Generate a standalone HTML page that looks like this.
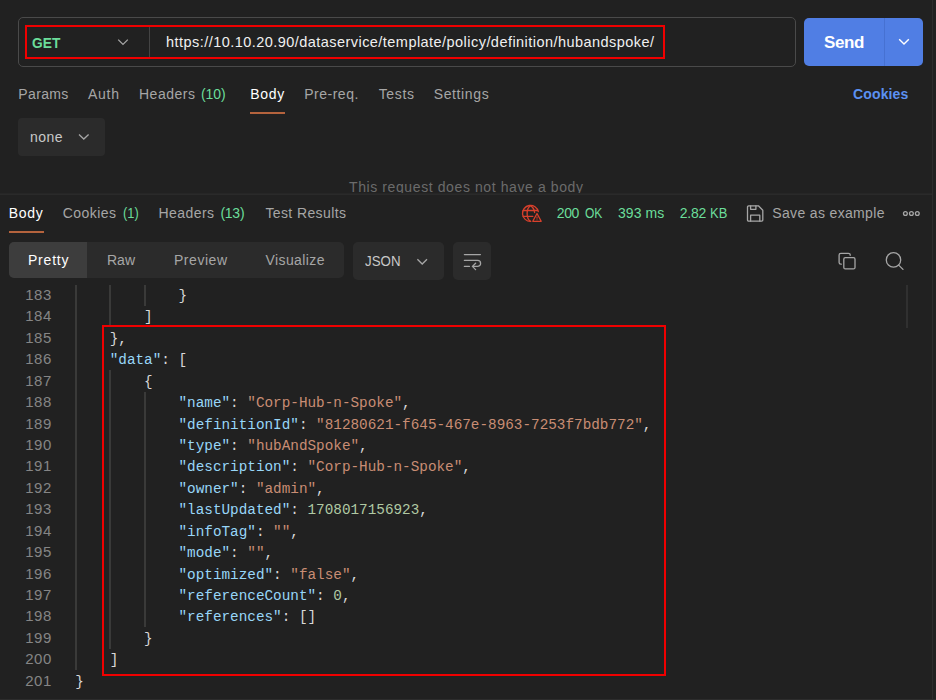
<!DOCTYPE html>
<html><head><meta charset="utf-8"><title>Postman</title><style>
html,body{margin:0;padding:0;}
body{width:936px;height:700px;background:#212121;overflow:hidden;position:relative;font-family:"Liberation Sans", sans-serif;}
.a{position:absolute;}
.t{position:absolute;white-space:pre;line-height:1;}
.c{position:absolute;white-space:pre;font-family:"Liberation Mono", monospace;font-size:14.33px;line-height:21px;height:21px;letter-spacing:0.0006px}
.ln{position:absolute;left:0;width:51.8px;text-align:right;font-size:15px;color:#858585;line-height:21px;height:21px;letter-spacing:0.5px}
.g{position:absolute;width:2px;background:#3a3a39;}
svg{position:absolute;overflow:visible}

</style></head><body>
<div class="a" id="req" style="left:0;top:0;width:932px;height:194px;overflow:hidden">
<div class="a" style="left:18px;top:17px;width:776px;height:48px;border:1px solid #4a4a4a;border-radius:5px;"></div>
<div class="a" style="left:149px;top:27px;width:1px;height:30px;background:#444"></div>
<div class="a" style="left:25px;top:25px;width:636px;height:30px;border:2px solid #f00000;"></div>
<svg style="left:0;top:0" width="1" height="1"><path d="M118.2 39.6 L123 44.4 L127.8 39.6" fill="none" stroke="#a6a6a6" stroke-width="1.3"/></svg>
<div class="a" style="left:804px;top:18px;width:119px;height:48px;background:#507ee4;border-radius:5px;"></div>
<div class="a" style="left:884px;top:18px;width:1px;height:48px;background:#4671d2"></div>
<svg style="left:897px;top:36px" width="14" height="12" viewBox="0 0 14 12"><path d="M2.2 3.2 L7 8 L11.8 3.2" fill="none" stroke="#ffffff" stroke-width="1.4"/></svg>
<div class="a" style="left:250px;top:112px;width:35px;height:2px;background:#b5633d"></div>
<div class="a" style="left:18px;top:118px;width:87px;height:38px;background:#2b2b2b;border-radius:4px;"></div>
<svg style="left:77px;top:131px" width="14" height="12" viewBox="0 0 14 12"><path d="M2 3.5 L6.8 8 L11.6 3.5" fill="none" stroke="#a6a6a6" stroke-width="1.3"/></svg>
<span class="t" id="t0" style="left:32.00px;top:35.53px;font-size:14.5px;font-weight:700;color:#6bdd9a;letter-spacing:0.000px;transform:scaleX(0.9493);transform-origin:0 0">GET</span>
<span class="t" id="t1" style="left:166.00px;top:35.23px;font-size:14.5px;font-weight:400;color:#f0f0f0;letter-spacing:0.454px">https://10.10.20.90/dataservice/template/policy/definition/hubandspoke/</span>
<span class="t" id="t2" style="left:824.00px;top:33.61px;font-size:17px;font-weight:700;color:#ffffff;letter-spacing:-0.354px">Send</span>
<span class="t" id="t3" style="left:18.30px;top:86.95px;font-size:14px;font-weight:400;color:#a6a6a6;letter-spacing:0.353px">Params</span>
<span class="t" id="t4" style="left:88.00px;top:86.95px;font-size:14px;font-weight:400;color:#a6a6a6;letter-spacing:0.729px">Auth</span>
<span class="t" id="t5" style="left:139.00px;top:86.95px;font-size:14px;font-weight:400;color:#a6a6a6;letter-spacing:0.513px">Headers</span>
<span class="t" id="t6" style="left:201.00px;top:86.95px;font-size:14px;font-weight:400;color:#6bdd9a;letter-spacing:-0.069px">(10)</span>
<span class="t" id="t7" style="left:250.30px;top:86.95px;font-size:14px;font-weight:400;color:#ffffff;letter-spacing:0.693px">Body</span>
<span class="t" id="t8" style="left:304.30px;top:86.95px;font-size:14px;font-weight:400;color:#a6a6a6;letter-spacing:0.489px">Pre-req.</span>
<span class="t" id="t9" style="left:378.70px;top:86.95px;font-size:14px;font-weight:400;color:#a6a6a6;letter-spacing:0.653px">Tests</span>
<span class="t" id="t10" style="left:433.70px;top:86.95px;font-size:14px;font-weight:400;color:#a6a6a6;letter-spacing:0.629px">Settings</span>
<span class="t" id="t11" style="left:853.00px;top:87.15px;font-size:14px;font-weight:700;color:#5b91f2;letter-spacing:0.139px">Cookies</span>
<span class="t" id="t12" style="left:30.00px;top:130.15px;font-size:14px;font-weight:400;color:#c8c8c8;letter-spacing:0.448px">none</span>
<span class="t" id="t13" style="left:349.00px;top:180.15px;font-size:14px;font-weight:400;color:#6b6b6b;letter-spacing:0.600px">This request does not have a body</span>
</div>
<div class="a" style="left:0;top:193px;width:932px;height:1px;background:#262626"></div><div class="a" style="left:0;top:194px;width:932px;height:1px;background:#2a2a2a"></div>
<div class="a" style="left:932px;top:0;width:1px;height:700px;background:#2d2d2d"></div>
<div class="a" style="left:0;top:699px;width:936px;height:1px;background:#2d2d2d"></div>
<div class="a" style="left:9px;top:231px;width:35px;height:2px;background:#b5633d"></div>
<div class="a" style="left:9px;top:242px;width:335px;height:36px;background:#2b2b2b;border-radius:5px;"></div>
<div class="a" style="left:9px;top:242px;width:78px;height:36px;background:#3d3d3d;border-radius:5px 0 0 5px;"></div>
<div class="a" style="left:353px;top:242px;width:91px;height:38px;background:#2b2b2b;border-radius:5px;"></div>
<svg style="left:0;top:0" width="1" height="1"><path d="M417.4 259.2 L422.2 264 L427 259.2" fill="none" stroke="#a6a6a6" stroke-width="1.3"/></svg>
<div class="a" style="left:453px;top:242px;width:38px;height:38px;background:#2b2b2b;border-radius:5px;"></div>
<svg style="left:0;top:0" width="1" height="1" fill="none" stroke-linecap="round" stroke-linejoin="round">
<g stroke="#d8402c" stroke-width="1.3">
<path d="M530.7 221.4 A8 8 0 1 1 538.3 211.6"/>
<path d="M530.5 205.6 C526 208.5 526 218.5 530.5 221.4"/>
<path d="M530.5 205.6 C533 207.2 534.3 209.5 534.6 212.5"/>
<path d="M523.2 210.5 H537.6 M523.2 216.4 H532.8"/>
<path d="M537 213.5 L541.2 221.3 H532.8 Z"/>
<path d="M537 216.9 V218.3 M537 219.8 V219.9" stroke-width="1"/>
</g>
<g stroke="#a6a6a6" stroke-width="1.3">
<path d="M748.6 205.8 H758.4 L762.8 210.2 V220.1 a1.1 1.1 0 0 1 -1.1 1.1 H748.6 a1.1 1.1 0 0 1 -1.1 -1.1 V206.9 a1.1 1.1 0 0 1 1.1 -1.1 Z"/>
<path d="M750.6 205.8 V209.3 H755.9 V205.8"/>
<path d="M750.6 221.2 V215.2 H759.8 V221.2"/>
<circle cx="905.4" cy="213.5" r="1.9"/><circle cx="911.4" cy="213.5" r="1.9"/><circle cx="917.3" cy="213.5" r="1.9"/>
<path d="M464.4 254.6 H480.4 M464.4 260.4 H477.6 a3 3 0 0 1 0 6 H473 M464.4 266.4 H469.4 M475.6 263.2 L472.4 266.4 L475.6 269.6"/>
<rect x="843.8" y="257.7" width="11.2" height="11.2" rx="1.5"/>
<path d="M841.3 264.2 H840.9 a1.8 1.8 0 0 1 -1.8 -1.8 V255.1 a1.8 1.8 0 0 1 1.8 -1.8 H848.4 a1.8 1.8 0 0 1 1.8 1.8 V255.3"/>
<circle cx="893.5" cy="259.9" r="7.2"/><path d="M898.7 265.1 L903 269.4"/>
</g></svg>
<span class="t" id="t14" style="left:8.80px;top:206.15px;font-size:14px;font-weight:400;color:#ffffff;letter-spacing:0.659px">Body</span>
<span class="t" id="t15" style="left:62.70px;top:206.15px;font-size:14px;font-weight:400;color:#a6a6a6;letter-spacing:0.451px">Cookies</span>
<span class="t" id="t16" style="left:123.00px;top:206.15px;font-size:14px;font-weight:400;color:#6bdd9a;letter-spacing:0.000px;transform:scaleX(0.9168);transform-origin:0 0">(1)</span>
<span class="t" id="t17" style="left:158.50px;top:206.15px;font-size:14px;font-weight:400;color:#a6a6a6;letter-spacing:0.430px">Headers</span>
<span class="t" id="t18" style="left:220.40px;top:206.15px;font-size:14px;font-weight:400;color:#6bdd9a;letter-spacing:-0.235px">(13)</span>
<span class="t" id="t19" style="left:265.40px;top:206.15px;font-size:14px;font-weight:400;color:#a6a6a6;letter-spacing:0.395px">Test Results</span>
<span class="t" id="t20" style="left:556.70px;top:206.45px;font-size:14px;font-weight:400;color:#6bdd9a;letter-spacing:-0.330px">200</span>
<span class="t" id="t21" style="left:585.40px;top:206.45px;font-size:14px;font-weight:400;color:#6bdd9a;letter-spacing:0.000px;transform:scaleX(0.8599);transform-origin:0 0">OK</span>
<span class="t" id="t22" style="left:618.00px;top:206.45px;font-size:14px;font-weight:400;color:#6bdd9a;letter-spacing:0.076px">393 ms</span>
<span class="t" id="t23" style="left:679.70px;top:206.45px;font-size:14px;font-weight:400;color:#6bdd9a;letter-spacing:-0.183px">2.82</span>
<span class="t" id="t24" style="left:710.40px;top:206.45px;font-size:14px;font-weight:400;color:#6bdd9a;letter-spacing:0.000px;transform:scaleX(0.9258);transform-origin:0 0">KB</span>
<span class="t" id="t25" style="left:772.30px;top:206.45px;font-size:14px;font-weight:400;color:#a6a6a6;letter-spacing:0.342px">Save as example</span>
<span class="t" id="t26" style="left:28.00px;top:253.15px;font-size:14px;font-weight:400;color:#ffffff;letter-spacing:0.784px">Pretty</span>
<span class="t" id="t27" style="left:107.00px;top:253.15px;font-size:14px;font-weight:400;color:#a6a6a6;letter-spacing:-0.008px">Raw</span>
<span class="t" id="t28" style="left:174.00px;top:253.15px;font-size:14px;font-weight:400;color:#a6a6a6;letter-spacing:0.534px">Preview</span>
<span class="t" id="t29" style="left:265.50px;top:253.15px;font-size:14px;font-weight:400;color:#a6a6a6;letter-spacing:0.402px">Visualize</span>
<span class="t" id="t30" style="left:365.30px;top:254.15px;font-size:14px;font-weight:400;color:#c8c8c8;letter-spacing:0.000px;transform:scaleX(0.9506);transform-origin:0 0">JSON</span>
<div class="a" id="code" style="left:0;top:0;width:932px;height:699px;overflow:hidden">
<div class="g" style="left:75px;top:284.60px;height:385.74px"></div>
<div class="g" style="left:109px;top:284.60px;height:42.86px"></div>
<div class="g" style="left:109px;top:370.32px;height:278.59px"></div>
<div class="g" style="left:144px;top:284.60px;height:21.43px"></div>
<div class="g" style="left:144px;top:391.75px;height:235.73px"></div>
<div class="g" style="left:906px;top:285px;width:2px;height:43px;background:#303030"></div>
<div class="ln" style="top:284px">183</div>
<div class="c" style="left:178.50px;top:286px"><span style="color:#d8d8d8">}</span></div>
<div class="ln" style="top:305px">184</div>
<div class="c" style="left:144.10px;top:307px"><span style="color:#d8d8d8">]</span></div>
<div class="ln" style="top:327px">185</div>
<div class="c" style="left:109.70px;top:329px"><span style="color:#d8d8d8">},</span></div>
<div class="ln" style="top:348px">186</div>
<div class="c" style="left:109.70px;top:350px"><span style="color:#98d6f8">"data"</span><span style="color:#d8d8d8">: [</span></div>
<div class="ln" style="top:370px">187</div>
<div class="c" style="left:144.10px;top:372px"><span style="color:#d8d8d8">{</span></div>
<div class="ln" style="top:391px">188</div>
<div class="c" style="left:178.50px;top:393px"><span style="color:#98d6f8">"name"</span><span style="color:#d8d8d8">: </span><span style="color:#c98d74">"Corp-Hub-n-Spoke"</span><span style="color:#d8d8d8">,</span></div>
<div class="ln" style="top:413px">189</div>
<div class="c" style="left:178.50px;top:415px"><span style="color:#98d6f8">"definitionId"</span><span style="color:#d8d8d8">: </span><span style="color:#c98d74">"81280621-f645-467e-8963-7253f7bdb772"</span><span style="color:#d8d8d8">,</span></div>
<div class="ln" style="top:434px">190</div>
<div class="c" style="left:178.50px;top:436px"><span style="color:#98d6f8">"type"</span><span style="color:#d8d8d8">: </span><span style="color:#c98d74">"hubAndSpoke"</span><span style="color:#d8d8d8">,</span></div>
<div class="ln" style="top:455px">191</div>
<div class="c" style="left:178.50px;top:457px"><span style="color:#98d6f8">"description"</span><span style="color:#d8d8d8">: </span><span style="color:#c98d74">"Corp-Hub-n-Spoke"</span><span style="color:#d8d8d8">,</span></div>
<div class="ln" style="top:477px">192</div>
<div class="c" style="left:178.50px;top:479px"><span style="color:#98d6f8">"owner"</span><span style="color:#d8d8d8">: </span><span style="color:#c98d74">"admin"</span><span style="color:#d8d8d8">,</span></div>
<div class="ln" style="top:498px">193</div>
<div class="c" style="left:178.50px;top:500px"><span style="color:#98d6f8">"lastUpdated"</span><span style="color:#d8d8d8">: </span><span style="color:#b0c9a3">1708017156923</span><span style="color:#d8d8d8">,</span></div>
<div class="ln" style="top:520px">194</div>
<div class="c" style="left:178.50px;top:522px"><span style="color:#98d6f8">"infoTag"</span><span style="color:#d8d8d8">: </span><span style="color:#c98d74">""</span><span style="color:#d8d8d8">,</span></div>
<div class="ln" style="top:541px">195</div>
<div class="c" style="left:178.50px;top:543px"><span style="color:#98d6f8">"mode"</span><span style="color:#d8d8d8">: </span><span style="color:#c98d74">""</span><span style="color:#d8d8d8">,</span></div>
<div class="ln" style="top:563px">196</div>
<div class="c" style="left:178.50px;top:565px"><span style="color:#98d6f8">"optimized"</span><span style="color:#d8d8d8">: </span><span style="color:#c98d74">"false"</span><span style="color:#d8d8d8">,</span></div>
<div class="ln" style="top:584px">197</div>
<div class="c" style="left:178.50px;top:586px"><span style="color:#98d6f8">"referenceCount"</span><span style="color:#d8d8d8">: </span><span style="color:#b0c9a3">0</span><span style="color:#d8d8d8">,</span></div>
<div class="ln" style="top:605px">198</div>
<div class="c" style="left:178.50px;top:607px"><span style="color:#98d6f8">"references"</span><span style="color:#d8d8d8">: []</span></div>
<div class="ln" style="top:627px">199</div>
<div class="c" style="left:144.10px;top:629px"><span style="color:#d8d8d8">}</span></div>
<div class="ln" style="top:648px">200</div>
<div class="c" style="left:109.70px;top:650px"><span style="color:#d8d8d8">]</span></div>
<div class="ln" style="top:670px">201</div>
<div class="c" style="left:75.30px;top:672px"><span style="color:#d8d8d8">}</span></div>
</div>
<div class="a" style="left:102px;top:325px;width:560px;height:347px;border:2px solid #f00000;"></div>
</body></html>
